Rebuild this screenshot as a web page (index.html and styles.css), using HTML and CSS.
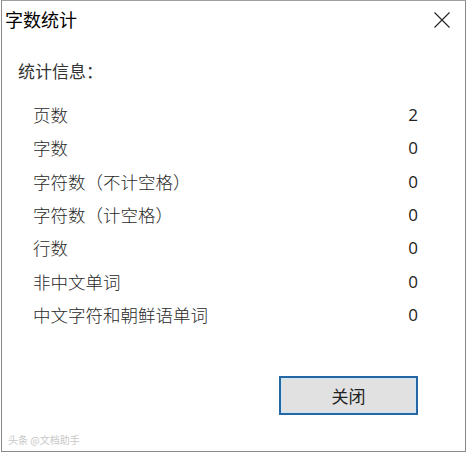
FILE: index.html
```html
<!DOCTYPE html>
<html lang="zh-CN">
<head>
    <meta charset="UTF-8" />
    <title>字数统计</title>
    <link rel="stylesheet" href="styles.css">
</head>
<body>

    <div class="dialog">
        <div class="titlebar">
            <div class="title">字数统计</div>
            <div class="close">
                <svg width="16" height="16" viewBox="0 0 16 16">
                    <path d="M0.5 0.5 L15.5 15.5 M15.5 0.5 L0.5 15.5" stroke="#222" stroke-width="1.1" fill="none" />
                </svg>
            </div>
        </div>

        <div class="content">
            <div class="caption">统计信息：</div>

            <div class="stats">
                <div class="row"><span>页数</span><span class="num">2</span></div>
                <div class="row"><span>字数</span><span class="num">0</span></div>
                <div class="row"><span>字符数（不计空格）</span><span class="num">0</span></div>
                <div class="row"><span>字符数（计空格）</span><span class="num">0</span></div>
                <div class="row"><span>行数</span><span class="num">0</span></div>
                <div class="row"><span>非中文单词</span><span class="num">0</span></div>
                <div class="row"><span>中文字符和朝鲜语单词</span><span class="num">0</span></div>
            </div>

            <div class="actions">
                <button class="btn">关闭</button>
            </div>
        </div>

        <div class="watermark">头条 @文档助手</div>
    </div>

</body>
</html>
```

FILE: styles.css
```css
* {
    box-sizing: border-box;
    margin: 0;
    padding: 0
}

body {
    width: 468px;
    height: 454px;
    background: #fff;
    font-family: "Noto Sans CJK SC", "Noto Sans", sans-serif;
    color: #222;
    overflow: hidden;
}

.dialog {
    position: relative;
    width: 465px;
    height: 452px;
    margin-left: 1px;
    border: 1px solid #8a8a8a;
    border-top-color: #a0a0a0;
    background: #fff;
}

.titlebar {
    display: flex;
    align-items: center;
    justify-content: space-between;
    height: 36px;
    padding: 0 15px 0 3px;
}

.title {
    font-size: 18px;
    color: #000;
}

.close {
    display: flex;
    margin-top: 1px;
}

.content {
    padding: 0 47px 0 16px;
}

.caption {
    font-size: 17px;
    color: #333;
    margin-top: 22px;
    height: 24px;
    line-height: 24px;
}

.stats {
    margin-top: 15px;
    padding-left: 15px;
}

.row {
    display: flex;
    justify-content: space-between;
    align-items: center;
    height: 33.3px;
    font-size: 17.5px;
    font-weight: 300;
    color: #2a2a2a;
}

.num {
    font-family: "Open Sans", "Noto Sans", sans-serif;
    font-size: 17px;
    font-weight: 400;
    color: #222;
}

.actions {
    display: flex;
    justify-content: flex-end;
    margin-top: 45px;
}

.btn {
    width: 139px;
    height: 39px;
    font-family: "Noto Sans CJK SC", sans-serif;
    font-size: 17px;
    color: #222;
    background: #e1e1e1;
    border: 2px solid #2467a2;
    box-shadow: inset 0 0 0 1px #cfe6f7;
}

.watermark {
    position: absolute;
    left: 6px;
    bottom: 4px;
    font-size: 10px;
    color: #c8c8c8;
}
```
